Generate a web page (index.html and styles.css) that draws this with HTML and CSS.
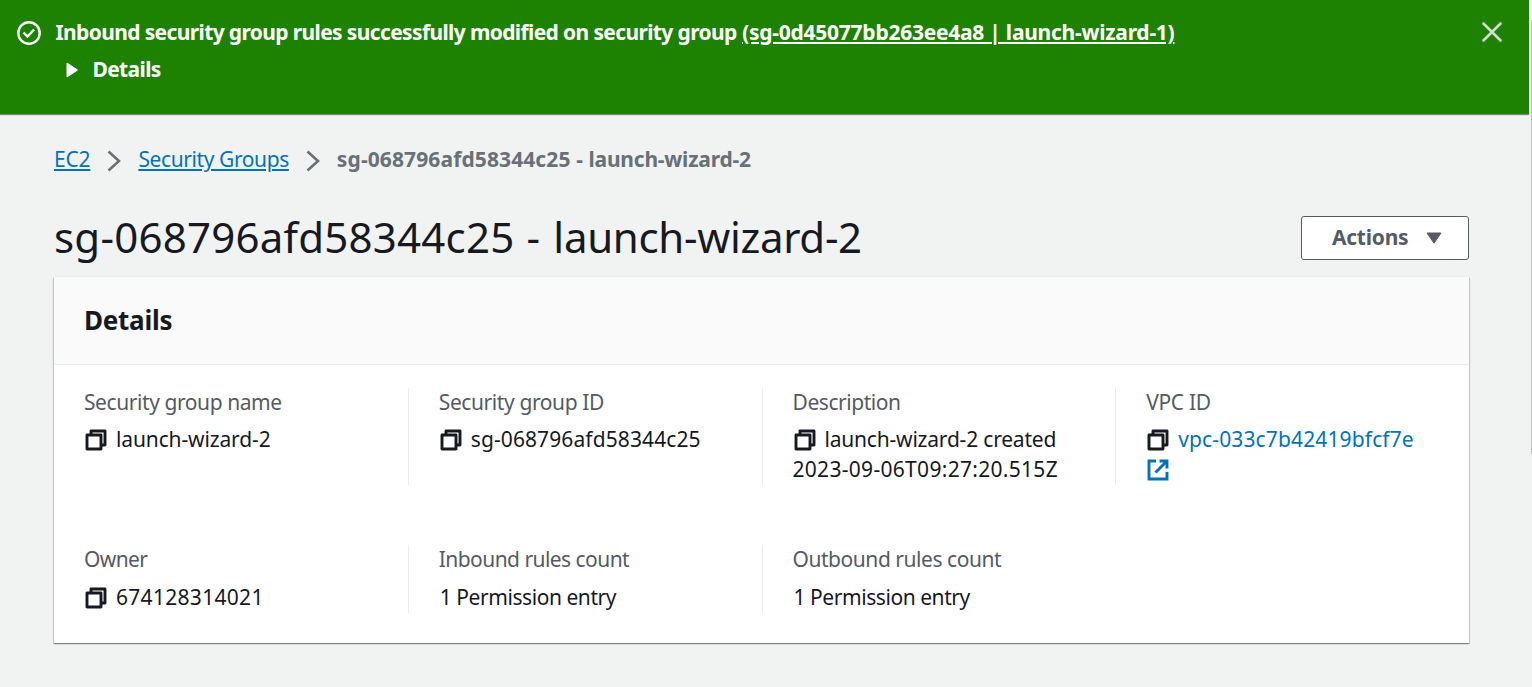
FILE: index.html
```html
<!DOCTYPE html>
<html lang="en">
<head>
<meta charset="utf-8">
<title>Security group details</title>
<link rel="stylesheet" href="styles.css">
</head>
<body>
<svg class="defs" width="0" height="0" aria-hidden="true">
  <symbol id="copy" viewBox="0 0 22 22">
    <path d="M6 5.500V2h14v14h-3.500M2 6h14v14H2z" fill="none" stroke="currentColor" stroke-width="2.900" stroke-linejoin="round"/>
  </symbol>
  <symbol id="external" viewBox="0 0 22 22">
    <path d="M9 2H2v18h18v-7M12.500 2H20v7.500M8.500 13.500L19.500 2.500" fill="none" stroke="currentColor" stroke-width="2.900"/>
  </symbol>
</svg>
<div class="viewport">
  <div class="page">
    <header class="flash">
      <svg class="flash-icon" viewBox="0 0 24 24"><circle cx="12" cy="12" r="10.700"/><path d="M6.500 11.500l4 4 6.500-7"/></svg>
      <div class="flash-body">
        <p class="flash-line"><span class="flash-text">Inbound security group rules successfully modified on security group</span> <a class="flash-link">(sg-0d45077bb263ee4a8 | launch-wizard-1)</a></p>
        <div class="flash-toggle"><svg class="caret-right" viewBox="0 0 12 16"><path d="M1 1v14l10.500-7z"/></svg><span>Details</span></div>
      </div>
      <svg class="close" viewBox="0 0 20 20"><path d="M1.500 1.500l17 17M18.500 1.500l-17 17"/></svg>
    </header>
    <main class="content">
      <nav class="crumbs">
        <a class="crumb-a">EC2</a>
        <svg class="chevron" viewBox="0 0 14 22"><path d="M1.500 1.500L12 11 1.500 20.500"/></svg>
        <a class="crumb-b">Security Groups</a>
        <svg class="chevron" viewBox="0 0 14 22"><path d="M1.500 1.500L12 11 1.500 20.500"/></svg>
        <span class="crumb-current"><span class="c-id">sg-068796afd58344c25 - </span><span class="c-name">launch-wizard-2</span></span>
      </nav>
      <div class="title-row">
        <h1 class="title"><span class="t-id">sg-068796afd58344c25</span><span class="t-dash"> - </span><span class="t-name">launch-wizard-2</span></h1>
        <button class="actions"><span class="actions-text">Actions</span><svg class="caret-down" viewBox="0 0 16 12"><path d="M1 1h14L8 11.200z"/></svg></button>
      </div>
      <section class="panel">
        <h2 class="panel-head"><span>Details</span></h2>
        <div class="grid">
          <div class="cell"><div class="label l-name">Security group name</div><div class="value"><svg class="icon"><use href="#copy"/></svg><span class="v-name">launch-wizard-2</span></div></div>
          <div class="cell"><div class="label l-id">Security group ID</div><div class="value"><svg class="icon"><use href="#copy"/></svg><span class="v-id">sg-068796afd58344c25</span></div></div>
          <div class="cell"><div class="label l-desc">Description</div><div class="value"><svg class="icon"><use href="#copy"/></svg><span class="v-desc">launch-wizard-2 created</span><br><span class="v-date">2023-09-06T09:27:20.515Z</span></div></div>
          <div class="cell"><div class="label l-vpc">VPC ID</div><div class="value link"><svg class="icon dark"><use href="#copy"/></svg><span class="v-vpc">vpc-033c7b42419bfcf7e</span><br><svg class="icon"><use href="#external"/></svg></div></div>
          <div class="cell second"><div class="label l-owner">Owner</div><div class="value"><svg class="icon"><use href="#copy"/></svg><span class="v-owner">674128314021</span></div></div>
          <div class="cell second"><div class="label l-in">Inbound rules count</div><div class="value"><span class="v-entry">1 Permission entry</span></div></div>
          <div class="cell second"><div class="label l-out">Outbound rules count</div><div class="value"><span class="v-entry">1 Permission entry</span></div></div>
        </div>
      </section>
    </main>
  </div>
  <div class="scroll"><div class="thumb"></div></div>
</div>
</body>
</html>
```
FILE: styles.css
```css
* { box-sizing: border-box; }
body { margin: 0; background: #f1f3f3; color: #16191f; font: 21px/30px "Noto Sans", sans-serif; overflow: hidden; }
p, h1, h2 { margin: 0; }
.defs { display: block; position: absolute; }
.viewport { display: flex; height: 687px; }
.page { width: 1529px; flex: none; }
.scroll { width: 3px; padding: 20px 0 0 2px; background: #f1f3f3; }
.thumb { height: 434px; background: #c1c1c1; }

.flash { display: flex; align-items: flex-start; height: 114px; padding: 17px 27px 0 17px; background: #1d8102; color: #fff; font-weight: 700; box-shadow: 0 1px 1px rgba(0, 20, 40, .5); }
.flash-icon { width: 24px; height: 24px; margin-top: 4px; fill: none; stroke: #fff; stroke-width: 2.4; }
.flash-body { flex: 1; padding-left: 14.5px; }
.flash-line { white-space: nowrap; }
.flash-text { letter-spacing: -.63px; }
.flash-link { letter-spacing: -.25px; }
.flash-link, .crumb-a, .crumb-b { text-decoration: underline; text-decoration-thickness: 2px; text-underline-offset: 2px; }
.flash-toggle { display: flex; align-items: center; gap: 15px; padding: 7px 0 0 10px; letter-spacing: -.65px; }
.caret-right { width: 12px; height: 16px; margin-top: 2px; fill: #fff; stroke: #fff; stroke-linejoin: round; }
.close { width: 20px; height: 20px; margin-top: 5px; stroke: #d5dbdb; stroke-width: 2.6; stroke-linecap: round; fill: none; }

.content { padding: 30px 60px 0 54px; }
.crumbs { display: flex; align-items: center; height: 30px; white-space: nowrap; }
.crumb-a, .crumb-b { color: #0073bb; }
.crumb-a { letter-spacing: -.2px; }
.crumb-b { letter-spacing: -.4px; }
.chevron { width: 14px; height: 22px; margin: 4px 17px 0 17px; fill: none; stroke: #687078; stroke-width: 2.6; }
.crumb-current { color: #687078; font-weight: 700; }
.c-id { letter-spacing: .11px; }
.c-name { letter-spacing: -.22px; }

.title-row { display: flex; align-items: center; justify-content: space-between; height: 44px; margin-top: 42px; }
.title { padding-bottom: 2px; font-size: 42px; line-height: 44px; font-weight: 400; white-space: nowrap; }
.t-id { letter-spacing: .23px; }
.t-dash { letter-spacing: 1.2px; }
.t-name { letter-spacing: -.3px; }
.actions { display: flex; align-items: center; gap: 18px; width: 168px; height: 44px; padding: 0 0 0 30px; border: 1px solid #545b64; border-radius: 3px; background: #fff; color: #545b64; font: 700 21px/30px "Noto Sans", sans-serif; }
.actions-text { padding-bottom: 2px; letter-spacing: -.25px; }
.caret-down { width: 16px; height: 12px; fill: #545b64; stroke: #545b64; stroke-linejoin: round; }

.panel { height: 366px; margin-top: 17px; background: #fff; box-shadow: 0 1px 1px rgba(0, 28, 36, .3), 1px 1px 1px rgba(0, 28, 36, .15), -1px 1px 1px rgba(0, 28, 36, .15), 0 -1px 0 #eaeded; }
.panel-head { height: 88px; padding: 28px 30px 0; border-bottom: 1px solid #eaeded; background: #fafafa; font-size: 26px; line-height: 30px; font-weight: 700; letter-spacing: -.25px; }
.grid { display: grid; grid-template-columns: repeat(4, 1fr); row-gap: 60px; padding-top: 23px; }
.cell { padding: 0 0 1px 30px; border-left: 1px solid #eaeded; white-space: nowrap; }
.cell:nth-child(4n + 1) { border-left: 0; }
.label { margin: -1px 0 7px; color: #545b64; }
.second .label { margin-bottom: 8px; }
.icon { width: 22px; height: 22px; margin: 0 9px 0 1px; vertical-align: -4px; }
.link { color: #0073bb; }
.dark { color: #16191f; }

/* Tracking for each label and value */
.l-name { letter-spacing: -.42px; }
.l-id { letter-spacing: -.4px; }
.l-desc { letter-spacing: -.45px; }
.l-vpc { letter-spacing: -.35px; }
.l-owner { letter-spacing: -.6px; }
.l-in { letter-spacing: -.55px; }
.l-out { letter-spacing: -.45px; }
.v-name { letter-spacing: -.13px; }
.v-id { letter-spacing: .1px; }
.v-desc { letter-spacing: -.2px; }
.v-date { letter-spacing: .3px; }
.v-vpc { letter-spacing: .13px; }
.v-owner { letter-spacing: .3px; }
.v-entry { margin-left: 1px; letter-spacing: -.44px; }
```
